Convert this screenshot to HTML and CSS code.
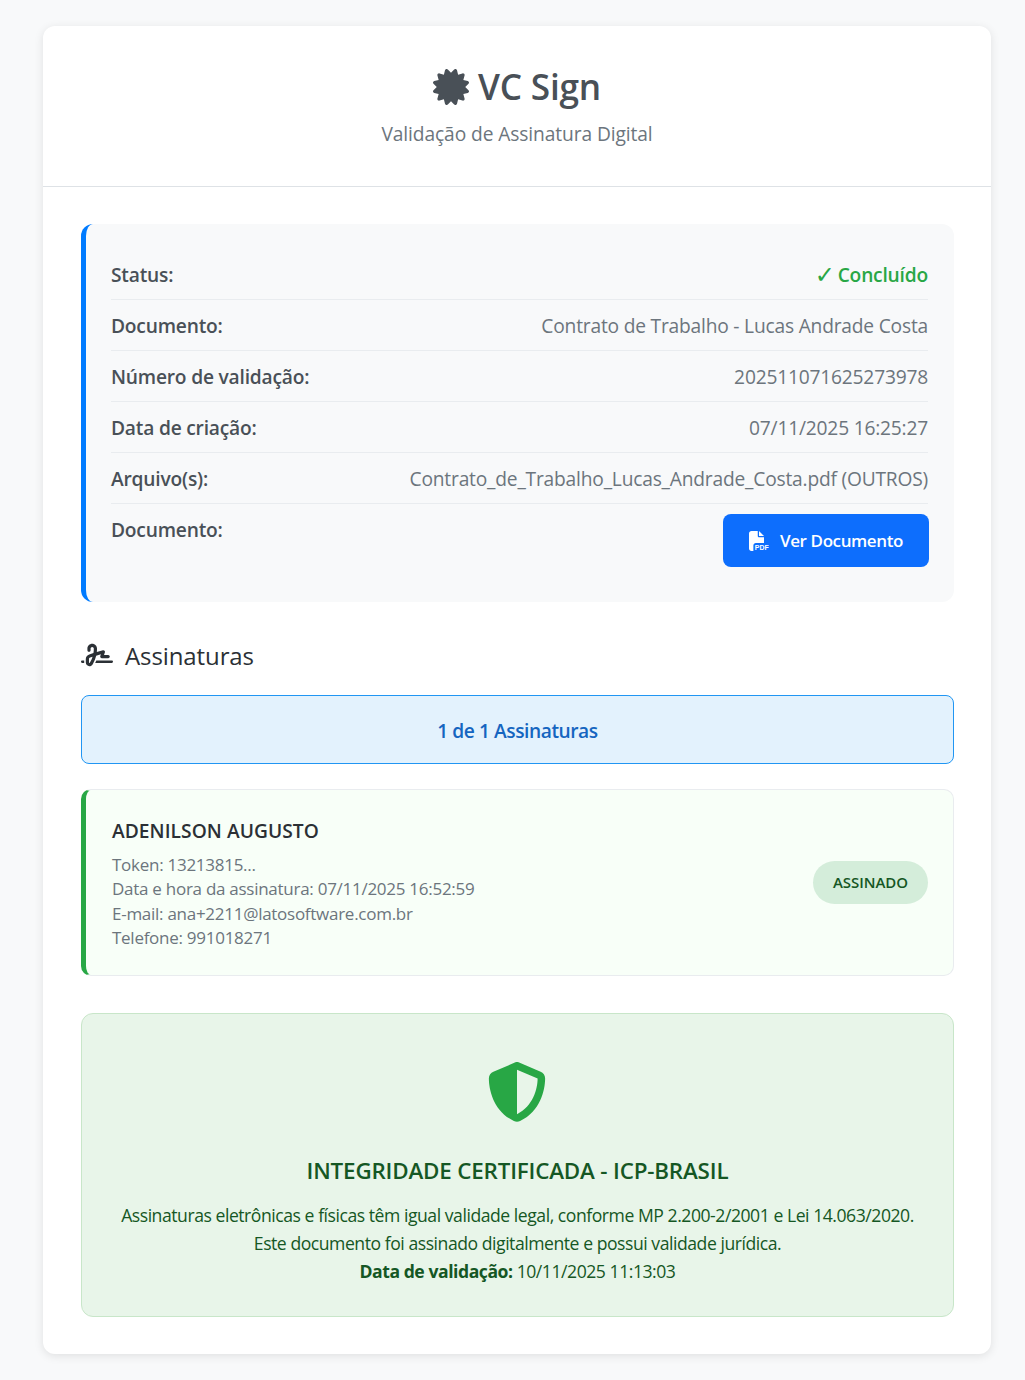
FILE: index.html
```html
<!DOCTYPE html>
<html>
<head>
    <title>VC Sign</title>
    <link rel="stylesheet" href="styles.css">
</head>
<body>
    <div class="container">
        <div class="header">
            <h1>
                <svg class="logo" viewBox="0 0 512 512"><path d="M211 7.3C205 1 196-1.4 187.6 .8s-14.9 8.9-17.1 17.3L154.7 80.6l-62-17.5c-8.4-2.4-17.4 0-23.5 6.1s-8.5 15.1-6.1 23.5l17.5 62L18.1 170.6c-8.4 2.1-15 8.7-17.3 17.1S1 205 7.3 211l46.2 45L7.3 301C1 307-1.4 316 .8 324.4s8.9 14.9 17.3 17.1l62.5 15.8-17.5 62c-2.4 8.4 0 17.4 6.1 23.5s15.1 8.5 23.5 6.1l62-17.5 15.8 62.5c2.1 8.4 8.7 15 17.1 17.3s17.3-.2 23.4-6.4l45-46.2 45 46.2c6.1 6.2 15 8.7 23.4 6.4s14.9-8.9 17.1-17.3l15.8-62.5 62 17.5c8.4 2.4 17.4 0 23.5-6.1s8.5-15.1 6.1-23.5l-17.5-62 62.5-15.8c8.4-2.1 15-8.7 17.3-17.1s-.2-17.4-6.4-23.4l-46.2-45 46.2-45c6.2-6.1 8.7-15 6.4-23.4s-8.9-14.9-17.3-17.1l-62.5-15.8 17.5-62c2.4-8.4 0-17.4-6.1-23.5s-15.1-8.5-23.5-6.1l-62 17.5L341.4 18.1c-2.1-8.4-8.7-15-17.1-17.3S307 1 301 7.3L256 53.5 211 7.3z"/></svg>
                VC Sign
            </h1>
            <p>Validação de Assinatura Digital</p>
        </div>

        <div class="content">
            <div class="info-box">
                <div class="info-row">
                    <span class="info-label">Status:</span>
                    <span class="status-done"><span class="check">✓</span><span>Concluído</span></span>
                </div>
                <div class="info-row">
                    <span class="info-label">Documento:</span>
                    <span class="info-value">Contrato de Trabalho - Lucas Andrade Costa</span>
                </div>
                <div class="info-row">
                    <span class="info-label">Número de validação:</span>
                    <span class="info-value">202511071625273978</span>
                </div>
                <div class="info-row">
                    <span class="info-label">Data de criação:</span>
                    <span class="info-value">07/11/2025 16:25:27</span>
                </div>
                <div class="info-row">
                    <span class="info-label">Arquivo(s):</span>
                    <span class="info-value">Contrato_de_Trabalho_Lucas_Andrade_Costa.pdf (OUTROS)</span>
                </div>
                <div class="info-row last">
                    <span class="info-label">Documento:</span>
                    <a class="btn" href="#">
                        <svg class="btn-icon" viewBox="0 0 512 512">
                            <path d="M0 64C0 28.7 28.7 0 64 0H224V128c0 17.7 14.3 32 32 32H384V304H176c-35.3 0-64 28.7-64 64V512H64c-35.3 0-64-28.7-64-64V64zm384 64H256V0L384 128z"/>
                            <text x="150" y="480" textLength="355" lengthAdjust="spacingAndGlyphs" class="pdf-label">PDF</text>
                        </svg>
                        Ver Documento
                    </a>
                </div>
            </div>

            <h2 class="section-title">
                <svg class="sig-icon" viewBox="0 0 640 512"><path d="M192 128c0-17.7 14.3-32 32-32s32 14.3 32 32v7.8c0 27.7-2.4 55.3-7.1 82.5l-84.4 25.3c-40.6 12.2-68.5 49.6-68.5 92v71.9c0 40 32.5 72.5 72.5 72.5c26 0 50-13.9 62.9-36.5l13.9-24.3c26.8-47 46.5-97.7 58.4-150.5l94.4-28.3-12.5 37.5c-3.3 9.8-1.6 20.5 4.4 28.8s15.7 13.3 26 13.3H544c17.7 0 32-14.3 32-32s-14.3-32-32-32H460.4l18-53.9c3.8-11.3 .9-23.8-7.4-32.4s-20.7-11.8-32.2-8.4L316.4 198.1c2.4-20.7 3.6-41.4 3.6-62.3V128c0-53-43-96-96-96s-96 43-96 96v32c0 17.7 14.3 32 32 32s32-14.3 32-32V128zm-9.2 177l49-14.7c-10.4 33.8-24.5 66.4-42.1 97.2l-13.9 24.3c-1.5 2.6-4.3 4.3-7.4 4.3c-4.7 0-8.5-3.8-8.5-8.5V335.6c0-14.1 9.3-26.6 22.8-30.7zM24 368c-13.3 0-24 10.7-24 24s10.7 24 24 24H64.3c-.2-2.8-.3-5.6-.3-8.5V368H24zm592 48c13.3 0 24-10.7 24-24s-10.7-24-24-24H305.9c-6.7 16.3-14.2 32.3-22.3 48H616z"/></svg>
                Assinaturas
            </h2>

            <div class="progress-box">1 de 1 Assinaturas</div>

            <div class="signer-card">
                <div class="signer-info">
                    <h3>ADENILSON AUGUSTO</h3>
                    <div class="signer-line">Token: 13213815...</div>
                    <div class="signer-line">Data e hora da assinatura: 07/11/2025 16:52:59</div>
                    <div class="signer-line">E-mail: ana+2211@latosoftware.com.br</div>
                    <div class="signer-line">Telefone: 991018271</div>
                </div>
                <span class="badge">ASSINADO</span>
            </div>

            <div class="integrity-box">
                <svg class="shield" viewBox="0 0 512 512"><path d="M256 0c4.6 0 9.2 1 13.4 2.9L457.7 82.8c22 9.3 38.4 31 38.3 57.2c-.5 99.2-41.3 280.7-213.6 363.2c-16.7 8-36.1 8-52.8 0C57.3 420.7 16.5 239.2 16 140c-.1-26.2 16.3-47.9 38.3-57.2L242.7 2.9C246.8 1 251.4 0 256 0zm0 66.8V444.8C394 378 431.1 230.1 432 141.4L256 66.8l0 0z"/></svg>
                <h3>INTEGRIDADE CERTIFICADA - ICP-BRASIL</h3>
                <p>Assinaturas eletrônicas e físicas têm igual validade legal, conforme MP 2.200-2/2001 e Lei 14.063/2020.</p>
                <p>Este documento foi assinado digitalmente e possui validade jurídica.</p>
                <p><strong>Data de validação:</strong> 10/11/2025 11:13:03</p>
            </div>
        </div>
    </div>
</body>
</html>
```

FILE: styles.css
```css
* {
    box-sizing: border-box;
}
body {
    margin: 0;
    padding: 26px 34px 26px 43px;
    background: #f8f9fa;
    font-family: "Open Sans", "Noto Sans", sans-serif;
    color: #495057;
}
.container {
    background: #fff;
    border-radius: 12px;
    box-shadow: 0 2px 10px rgba(0, 0, 0, 0.1);
    height: 1328px;
}
.header {
    height: 161px;
    padding-top: 37px;
    text-align: center;
    border-bottom: 1px solid #dee2e6;
}
.header h1 {
    margin: 0;
    font-size: 35.2px;
    line-height: 46px;
    font-weight: 600;
    letter-spacing: -0.2px;
    color: #495057;
}
.logo {
    width: 36px;
    height: 36px;
    vertical-align: -5px;
    fill: #495057;
}
.header p {
    margin: 11px 0 0;
    font-size: 19.2px;
    line-height: 27px;
    letter-spacing: -0.1px;
    color: #6c757d;
}
.content {
    padding: 37px 37px 37px 38px;
}
.info-box {
    background: #f8f9fa;
    border-left: 5px solid #007bff;
    border-radius: 12px;
    padding: 25px 26px 35px 25px;
    margin-bottom: 34px;
}
.info-row {
    display: flex;
    justify-content: space-between;
    align-items: flex-start;
    height: 51px;
    padding: 15px 0 0;
    border-bottom: 1px solid #e9ecef;
    font-size: 19.2px;
    line-height: 22px;
    letter-spacing: -0.2px;
}
.info-row.last {
    height: auto;
    padding-top: 10px;
    border-bottom: 0;
}
.info-row.last .info-label {
    padding-top: 5px;
}
.info-label {
    font-weight: 600;
    color: #495057;
}
.info-value {
    color: #6c757d;
}
.status-done {
    display: flex;
    gap: 3px;
    font-weight: 600;
    color: #28a745;
}
.check {
    font-family: "DejaVu Sans", sans-serif;
    font-size: 24px;
    font-weight: 400;
}
.btn {
    display: flex;
    align-items: center;
    justify-content: center;
    gap: 11px;
    width: 206px;
    height: 53px;
    margin-right: -1px;
    background: #0d6efd;
    border-radius: 8px;
    color: #fff;
    font-size: 17px;
    font-weight: 600;
    letter-spacing: -0.4px;
    text-decoration: none;
}
.btn-icon {
    width: 20px;
    height: 20px;
    fill: #fff;
}
.pdf-label {
    font-family: "Liberation Sans", sans-serif;
    font-size: 180px;
    font-weight: 700;
    letter-spacing: 0;
}
.section-title {
    display: flex;
    align-items: center;
    gap: 12px;
    margin: 0 0 21px;
    height: 38px;
    font-size: 24px;
    font-weight: 500;
    letter-spacing: -0.1px;
    color: #2b3035;
}
.sig-icon {
    width: 32px;
    height: 26px;
    fill: #2b3035;
}
.progress-box {
    height: 69px;
    line-height: 69px;
    margin-bottom: 25px;
    text-align: center;
    background: #e3f2fd;
    border: 1px solid #2196f3;
    border-radius: 8px;
    font-size: 19.2px;
    font-weight: 600;
    letter-spacing: -0.45px;
    color: #1565c0;
}
.signer-card {
    display: flex;
    justify-content: space-between;
    align-items: center;
    height: 187px;
    padding: 0 25px 0 26px;
    margin-bottom: 37px;
    background: #f8fff8;
    border: 1px solid #e9ecef;
    border-left: 5px solid #28a745;
    border-radius: 10px;
}
.signer-info {
    padding-top: 3px;
}
.signer-info h3 {
    margin: 0 0 9px;
    font-size: 19.2px;
    line-height: 26px;
    font-weight: 600;
    letter-spacing: 0.05px;
    color: #2b3035;
}
.signer-line {
    font-size: 17px;
    line-height: 24.5px;
    letter-spacing: -0.27px;
    color: #6c757d;
}
.badge {
    padding: 10px 20px;
    border-radius: 22px;
    background: #d4edda;
    font-size: 15px;
    line-height: 23px;
    font-weight: 600;
    letter-spacing: -0.05px;
    color: #155724;
}
.integrity-box {
    height: 304px;
    padding-top: 48px;
    text-align: center;
    background: #e8f5e9;
    border: 1px solid #c8e6c9;
    border-radius: 12px;
    color: #155724;
}
.shield {
    display: block;
    width: 60px;
    height: 60px;
    margin: 0 0 33px 405px;
    fill: #28a745;
}
.integrity-box h3 {
    margin: 0 0 14px;
    font-size: 22.4px;
    line-height: 32px;
    font-weight: 600;
    letter-spacing: -0.18px;
}
.integrity-box p {
    margin: 0;
    font-size: 17.6px;
    line-height: 28px;
    letter-spacing: -0.46px;
}
```
